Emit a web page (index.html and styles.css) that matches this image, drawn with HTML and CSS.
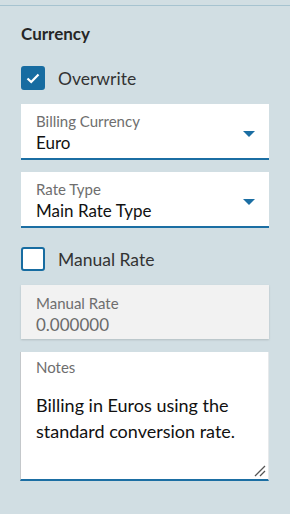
FILE: index.html
```html
<!DOCTYPE html>
<html lang="en">
<head>
    <meta charset="UTF-8">
    <meta name="viewport" content="width=device-width, initial-scale=1.0">
    <title>Currency</title>
    <link rel="stylesheet" href="styles.css">
</head>
<body>
    <div class="panel">
        <h2 class="title">Currency</h2>

        <label class="check-row">
            <span class="box checked">
                <svg width="16" height="16" viewBox="0 0 16 16"><path d="M2.5 8.5 L6.2 12 L13.5 4.5" fill="none" stroke="#fff" stroke-width="2.2"/></svg>
            </span>
            <span class="check-label">Overwrite</span>
        </label>

        <div class="field select">
            <div class="field-text">
                <div class="field-label">Billing Currency</div>
                <div class="field-value">Euro</div>
            </div>
            <span class="arrow"></span>
        </div>

        <div class="field select rate-type">
            <div class="field-text">
                <div class="field-label">Rate Type</div>
                <div class="field-value">Main Rate Type</div>
            </div>
            <span class="arrow"></span>
        </div>

        <label class="check-row manual">
            <span class="box"></span>
            <span class="check-label">Manual Rate</span>
        </label>

        <div class="field disabled">
            <div class="field-text">
                <div class="field-label">Manual Rate</div>
                <div class="field-value">0.000000</div>
            </div>
        </div>

        <div class="notes">
            <div class="field-label">Notes</div>
            <div class="notes-text">Billing in Euros using the standard conversion rate.</div>
            <svg class="grip" width="12" height="12" viewBox="0 0 12 12">
                <path d="M1 11 L11 1 M6 11 L11 6" stroke="#555" stroke-width="1.3" fill="none"/>
            </svg>
        </div>
    </div>
</body>
</html>
```

FILE: styles.css
```css
body {
    margin: 0;
    padding: 0;
    background-color: #d1dee3;
    font-family: Lato, "Noto Sans", sans-serif;
    color: #1d1d1d;
}
.panel {
    margin-top: 5px;
    border-top: 1px solid #a6c3d0;
    padding: 18px 21px 0 21px;
}
.title {
    margin: 0;
    font-size: 17px;
    line-height: 20px;
    font-weight: bold;
    color: #262626;
}
.check-row {
    display: flex;
    align-items: center;
    margin-top: 22px;
}
.box {
    width: 24px;
    height: 24px;
    box-sizing: border-box;
    border: 2px solid #176ca1;
    border-radius: 3px;
    background-color: white;
    display: flex;
    align-items: center;
    justify-content: center;
}
.box.checked {
    background-color: #176ca1;
}
.check-label {
    margin-left: 13px;
    font-size: 17.5px;
    color: #333;
}
.field {
    display: flex;
    align-items: flex-start;
    background-color: white;
    height: 56px;
    box-sizing: border-box;
    padding: 8px 14px 0 15px;
    border-bottom: 2px solid #1b6ea3;
    margin-top: 14px;
}
.field-text {
    flex: 1;
}
.field-label {
    font-size: 15px;
    line-height: 18px;
    color: #6e6e6e;
}
.field-value {
    margin-top: 1px;
    font-size: 17px;
    line-height: 24px;
    color: #111;
}
.arrow {
    width: 0;
    height: 0;
    border-left: 6px solid transparent;
    border-right: 6px solid transparent;
    border-top: 6px solid #1b6ea3;
    margin-top: 19px;
}
.rate-type {
    margin-top: 12px;
}
.manual {
    margin-top: 19px;
}
.field.disabled {
    height: 54px;
    padding-top: 9px;
    background-color: #f2f2f2;
    border-bottom: none;
    box-shadow: 0 1px 2px rgba(0, 0, 0, 0.15);
    margin-top: 14px;
}
.field.disabled .field-value {
    color: #6a6a6a;
}
.notes {
    position: relative;
    margin-top: 13px;
    margin-left: -1px;
    background-color: white;
    height: 129px;
    box-sizing: border-box;
    border-left: 1px solid #c4c8cb;
    border-right: 1px solid #e6e9eb;
    border-bottom: 2px solid #1b6ea3;
    padding: 6px 15px 0 15px;
}
.notes-text {
    margin-top: 16px;
    font-size: 18px;
    line-height: 26px;
    color: #111;
}
.grip {
    position: absolute;
    right: 2px;
    bottom: 2px;
}
```
